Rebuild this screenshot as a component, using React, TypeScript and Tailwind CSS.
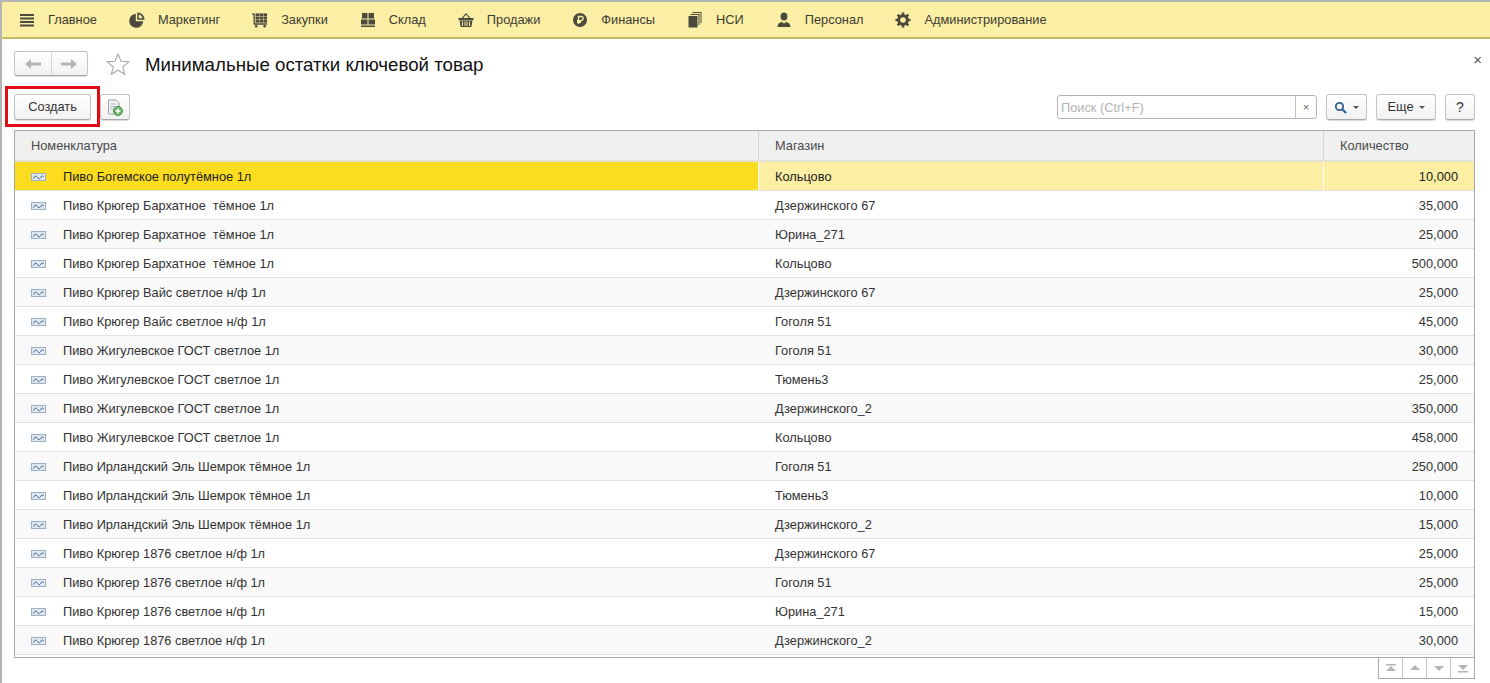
import React from 'react';

const ic = '#4b4a3c';

const MenuIcon = () => (
  <svg width="16" height="16" viewBox="0 0 16 16" fill={ic}>
    <rect x="1" y="2" width="14" height="2" />
    <rect x="1" y="5.5" width="14" height="2" />
    <rect x="1" y="9" width="14" height="2" />
    <rect x="1" y="12.5" width="14" height="2" />
  </svg>
);

const PieIcon = () => (
  <svg width="16" height="16" viewBox="0 0 16 16" fill={ic}>
    <path d="M6.800 1.800a7 7 0 1 0 7.400 7.400H6.800z" />
    <path d="M8.300 0.500a7.200 7.200 0 0 1 7.200 7.200H8.300z" />
    <path d="M9.800 2.300v3.900h3.900a5.500 5.500 0 0 0-3.900-3.900z" fill="#fbeea5" />
  </svg>
);

const CartIcon = () => (
  <svg width="17" height="16" viewBox="0 0 17 16" fill={ic}>
    <path d="M0 1h3v10.500h13V13H1.600V2.400H0z" />
    <rect x="3.800" y="1" width="3.800" height="3" />
    <rect x="8" y="1" width="3.800" height="3" />
    <rect x="12.200" y="1" width="3.800" height="3" />
    <rect x="3.800" y="4.400" width="3.800" height="3" />
    <rect x="8" y="4.400" width="3.800" height="3" />
    <rect x="12.200" y="4.400" width="3.800" height="3" />
    <rect x="3.800" y="7.800" width="3.800" height="3" />
    <rect x="8" y="7.800" width="3.800" height="3" />
    <rect x="12.200" y="7.800" width="3.800" height="3" />
    <circle cx="4.500" cy="14.600" r="1.400" />
    <circle cx="13.500" cy="14.600" r="1.400" />
  </svg>
);

const StockIcon = () => (
  <svg width="16" height="16" viewBox="0 0 16 16" fill={ic}>
    <rect x="2" y="1" width="5.500" height="5.500" />
    <rect x="8.500" y="1" width="5.500" height="5.500" />
    <rect x="1" y="7.500" width="6.500" height="5" />
    <rect x="8.500" y="7.500" width="6.500" height="5" />
    <rect x="1" y="13.500" width="14" height="1.500" />
  </svg>
);

const BasketIcon = () => (
  <svg width="16" height="16" viewBox="0 0 16 16" fill={ic}>
    <path d="M8 1 3.600 6h1.500L8 2.800 10.900 6h1.500z" />
    <rect x="0.500" y="6" width="15" height="2" />
    <path d="M1.500 8.500h13L13.300 15H2.700zM4 9.500v4.500h1V9.500zm2.500 0v4.500h1V9.500zm2 0v4.500h1V9.500zm2.500 0v4.500h1V9.500z" fillRule="evenodd" />
  </svg>
);

const RubleIcon = () => (
  <svg width="16" height="16" viewBox="0 0 16 16">
    <circle cx="8" cy="8" r="7" fill={ic} />
    <path d="M6.500 12V4.500h2.500a2 2 0 0 1 0 4.200H5M5 10.300h4" fill="none" stroke="#fbeea5" strokeWidth="1.400" />
  </svg>
);

const PagesIcon = () => (
  <svg width="14" height="16" viewBox="0 0 14 16" fill={ic}>
    <rect x="0.500" y="4" width="9" height="11.500" />
    <path d="M2.500 3h8v10h1V2h-9zM4.500 1h8v10h1V0h-9z" />
  </svg>
);

const PersonIcon = () => (
  <svg width="14" height="16" viewBox="0 0 14 16" fill={ic}>
    <ellipse cx="7" cy="4.500" rx="3.400" ry="4" />
    <path d="M0.500 15c0-3 2-4.500 4.500-5l2 1.500L9 10c2.500.5 4.500 2 4.500 5z" />
  </svg>
);

const GearIcon = () => (
  <svg width="16" height="16" viewBox="0 0 16 16" fill="none">
    <circle cx="8" cy="8" r="4.300" stroke={ic} strokeWidth="3" />
    <path d="M8 .5v15M.5 8h15M2.700 2.700l10.600 10.600M13.300 2.700 2.700 13.300" stroke={ic} strokeWidth="2.600" strokeDasharray="3 9 3" />
  </svg>
);

const RowIcon = () => (
  <svg width="15" height="8" viewBox="0 0 15 8" className="shrink-0">
    <rect x="0.500" y="0.500" width="14" height="7" fill="#dfe8f0" stroke="#9db0c2" />
    <path d="M2.500 5.500c1.500-3 2.500-3 4-1s2.500 1 3.500-.5 1.500-1 2.500-.5" fill="none" stroke="#31587a" strokeWidth="1" />
  </svg>
);

const navItems = [
  { label: 'Главное', icon: <MenuIcon /> },
  { label: 'Маркетинг', icon: <PieIcon /> },
  { label: 'Закупки', icon: <CartIcon /> },
  { label: 'Склад', icon: <StockIcon /> },
  { label: 'Продажи', icon: <BasketIcon /> },
  { label: 'Финансы', icon: <RubleIcon /> },
  { label: 'НСИ', icon: <PagesIcon /> },
  { label: 'Персонал', icon: <PersonIcon /> },
  { label: 'Администрирование', icon: <GearIcon /> },
];

const rows = [
  ['Пиво Богемское полутёмное 1л', 'Кольцово', '10,000'],
  ['Пиво Крюгер Бархатное  тёмное 1л', 'Дзержинского 67', '35,000'],
  ['Пиво Крюгер Бархатное  тёмное 1л', 'Юрина_271', '25,000'],
  ['Пиво Крюгер Бархатное  тёмное 1л', 'Кольцово', '500,000'],
  ['Пиво Крюгер Вайс светлое н/ф 1л', 'Дзержинского 67', '25,000'],
  ['Пиво Крюгер Вайс светлое н/ф 1л', 'Гоголя 51', '45,000'],
  ['Пиво Жигулевское ГОСТ светлое 1л', 'Гоголя 51', '30,000'],
  ['Пиво Жигулевское ГОСТ светлое 1л', 'Тюмень3', '25,000'],
  ['Пиво Жигулевское ГОСТ светлое 1л', 'Дзержинского_2', '350,000'],
  ['Пиво Жигулевское ГОСТ светлое 1л', 'Кольцово', '458,000'],
  ['Пиво Ирландский Эль Шемрок тёмное 1л', 'Гоголя 51', '250,000'],
  ['Пиво Ирландский Эль Шемрок тёмное 1л', 'Тюмень3', '10,000'],
  ['Пиво Ирландский Эль Шемрок тёмное 1л', 'Дзержинского_2', '15,000'],
  ['Пиво Крюгер 1876 светлое н/ф 1л', 'Дзержинского 67', '25,000'],
  ['Пиво Крюгер 1876 светлое н/ф 1л', 'Гоголя 51', '25,000'],
  ['Пиво Крюгер 1876 светлое н/ф 1л', 'Юрина_271', '15,000'],
  ['Пиво Крюгер 1876 светлое н/ф 1л', 'Дзержинского_2', '30,000'],
];

const btn = 'flex items-center justify-center rounded-[3px] border border-[#c4c4c4] border-b-[#a8a8a8] bg-gradient-to-b from-white to-[#f1f1f1] shadow-[0_1px_1px_rgba(0,0,0,0.15)] text-[#333]';

const Caret = () => <span className="inline-block border-x-[3px] border-t-[3px] border-x-transparent border-t-[#555]" />;

export default function App() {
  return (
    <div className="h-[683px] w-[1490px] overflow-hidden border-l-2 border-t-2 border-[#b5b5b5] bg-white text-[12.8px] text-[#333] font-['Liberation_Sans',Arial,sans-serif]">
      <nav className="flex h-[37px] items-center gap-8 border-b-2 border-[#c9bb62] bg-[#fbeea5] pl-[17px]">
        {navItems.map((item) => (
          <div key={item.label} className="flex items-center gap-[13px]">
            <span className="flex h-4 w-4 items-center justify-center">{item.icon}</span>
            <span className="pt-[1px] text-[#3d3d33]">{item.label}</span>
          </div>
        ))}
      </nav>

      <div className="flex h-[55px] items-center pl-3 pr-[8px] pb-[6px]">
        <div className={`${btn} h-[25px] w-[74px]`}>
          <span className="flex h-full flex-1 items-center justify-center border-r border-[#d4d4d4]">
            <svg width="16" height="12" viewBox="0 0 16 12" fill="#b4b4b4"><path d="M0 6 6 1v3.500h10v3H6V11z" /></svg>
          </span>
          <span className="flex h-full flex-1 items-center justify-center">
            <svg width="16" height="12" viewBox="0 0 16 12" fill="#b4b4b4"><path d="M16 6 10 1v3.500H0v3h10V11z" /></svg>
          </span>
        </div>
        <svg width="24" height="24" viewBox="0 0 24 24" className="ml-[18px]" fill="none" stroke="#a9a9a9" strokeWidth="1.100">
          <path d="M12 2l3 7.200 7.700.6-5.900 5 1.900 7.500L12 18.200l-6.700 4.100 1.900-7.500-5.900-5L9 9.200z" />
        </svg>
        <h1 className="ml-[15px] mt-[4px] text-[18.7px] font-normal text-[#111]">Минимальные остатки ключевой товар</h1>
        <span className="ml-auto mt-[-9px] text-[15px] leading-none text-[#555]">×</span>
      </div>

      <div className="flex h-[36px] items-start pl-3 pr-[15px]">
        <div className="relative">
          <button className={`${btn} h-[26px] w-[77px] text-[12.8px]`}>Создать</button>
          <div className="absolute -inset-x-[9px] -bottom-[7px] -top-[8px] border-[3px] border-[#e00d16]" />
        </div>
        <button className={`${btn} ml-[9px] h-[26px] w-[30px]`}>
          <svg width="16" height="17" viewBox="0 0 16 17">
            <path d="M1.500 1h7.500l3 3v11h-10.500z" fill="#f4f4f4" stroke="#9aa0a4" />
            <path d="M3.500 5h5M3.500 7.500h5M3.500 10h3" stroke="#9db2c6" />
            <circle cx="11" cy="12" r="4.500" fill="#6db36b" stroke="#4c8f4b" />
            <path d="M11 9.500v5M8.500 12h5" stroke="#fff" strokeWidth="1.600" />
          </svg>
        </button>
        <div className="ml-auto mt-[1px] flex h-[24px] w-[260px] rounded-[3px] border border-[#b4b4b4] bg-white">
          <span className="flex-1 pl-[3px] leading-[23px] text-[#b3b3b3]">Поиск (Ctrl+F)</span>
          <span className="flex w-[21px] items-center justify-center border-l border-[#c4c4c4] text-[11px] text-[#666]">×</span>
        </div>
        <button className={`${btn} ml-[9px] h-[26px] w-[41px] gap-[6px]`}>
          <svg width="13" height="13" viewBox="0 0 13 13" fill="none" stroke="#30618d" strokeWidth="1.800">
            <circle cx="5.500" cy="5.500" r="3.700" />
            <path d="M8.500 8.500 12 12" strokeWidth="2.200" />
          </svg>
          <Caret />
        </button>
        <button className={`${btn} ml-[9px] h-[26px] w-[60px] gap-[5px] text-[12.8px]`}>
          Еще
          <Caret />
        </button>
        <button className={`${btn} ml-[9px] h-[26px] w-[30px] text-[14px]`}>?</button>
      </div>

      <div className="ml-[12px] mr-[15px] border border-[#a9a9a9]">
        <div className="flex h-[31px] items-center border-b-2 border-[#e4e2d6] bg-[#f0f0f0] text-[#4a4a4a]">
          <div className="flex h-full w-[744px] items-center border-r border-[#d5d5d5] pl-4">Номенклатура</div>
          <div className="flex h-full w-[565px] items-center border-r border-[#d5d5d5] pl-4">Магазин</div>
          <div className="flex h-full flex-1 items-center pl-4">Количество</div>
        </div>
        <div className="h-[495px] overflow-hidden">
          {rows.map((row, i) => {
            const selected = i === 0;
            return (
              <div key={i} className={`flex h-[29px] items-center border-b border-[#e3e3e3] ${i % 2 === 1 ? 'bg-white' : 'bg-[#f9f9f9]'}`}>
                <div className={`flex h-full w-[744px] items-center gap-[17px] whitespace-pre pl-4 pt-[1px] border-r ${selected ? 'border-white bg-[#fcdc1e] text-[#222]' : 'border-transparent'}`}>
                  <RowIcon />
                  {row[0]}
                </div>
                <div className={`flex h-full w-[565px] items-center pl-4 pt-[1px] border-r ${selected ? 'border-white bg-[#fcefa4] text-[#222]' : 'border-transparent'}`}>{row[1]}</div>
                <div className={`flex h-full flex-1 items-center justify-end pr-4 pt-[1px] ${selected ? 'bg-[#fcefa4] text-[#222]' : ''}`}>{row[2]}</div>
              </div>
            );
          })}
        </div>
      </div>

      <div className="mr-[15px] flex justify-end">
        <div className="flex h-[21px] border-x border-b border-[#a9a9a9]">
          {[
            <path key="a" d="M1 2h10v1.500H1zM6 4l5 5H1z" />,
            <path key="b" d="M6 3l5 5H1z" />,
            <path key="c" d="M6 9 1 4h10z" />,
            <path key="d" d="M6 8 1 3h10zM1 9h10v1.500H1z" />,
          ].map((glyph, i) => (
            <span key={i} className={`flex items-center justify-center ${i > 0 ? 'w-6 border-l border-[#c8c8c8]' : 'w-[23px]'}`}>
              <svg width="12" height="12" viewBox="0 0 12 12" fill="#b4b4b4">{glyph}</svg>
            </span>
          ))}
        </div>
      </div>
    </div>
  );
}
